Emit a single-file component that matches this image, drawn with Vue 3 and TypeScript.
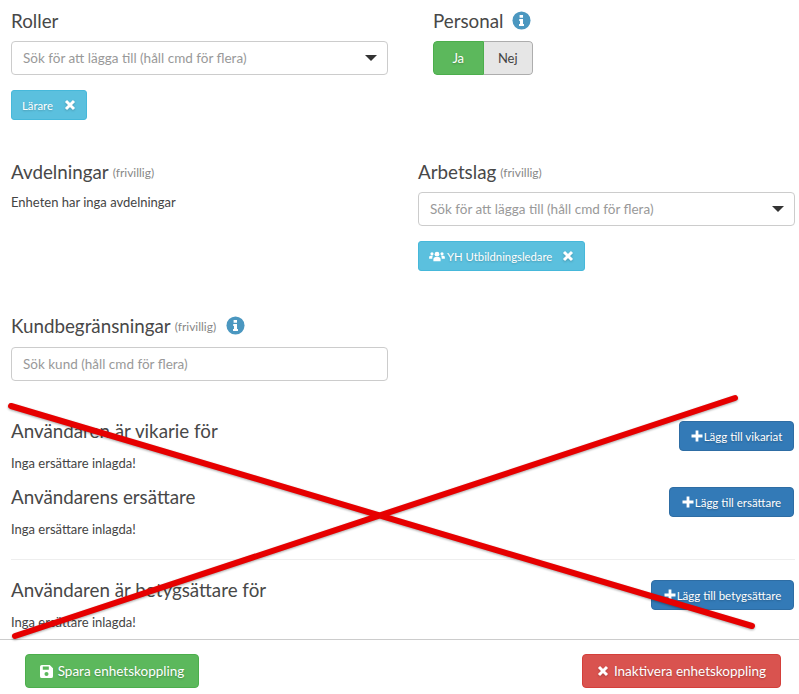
<script setup lang="ts">
interface Person { title: string; button: string; empty: string; width: number }

const people: Person[] = [
  { title: 'Användaren är vikarie för', button: 'Lägg till vikariat', empty: 'Inga ersättare inlagda!', width: 115 },
  { title: 'Användarens ersättare', button: 'Lägg till ersättare', empty: 'Inga ersättare inlagda!', width: 125 },
]
const grader: Person = { title: 'Användaren är betygsättare för', button: 'Lägg till betygsättare', empty: 'Inga ersättare inlagda!', width: 143 }
const placeholder = 'Sök för att lägga till (håll cmd för flera)'
</script>

<template>
  <div class="page">
    <main class="content">
      <section class="row row-roles">
        <div class="col">
          <h4>Roller</h4>
          <div class="field">
            <span>{{ placeholder }}</span>
            <i class="caret"></i>
          </div>
          <span class="tag">
            Lärare
            <svg class="tag-x" viewBox="0 0 12 12"><path d="M2 2l8 8M10 2l-8 8" /></svg>
          </span>
        </div>
        <div class="col col-staff">
          <h4>
            Personal
            <svg class="info" viewBox="0 0 20 20">
              <circle cx="10" cy="10" r="9.500" />
              <path d="M8 4.200h3.600v2.800H8zM7.600 8.400h4v5.200h1v2.200H7.400v-2.200h1v-3h-.8z" />
            </svg>
          </h4>
          <div class="toggle">
            <span class="on">Ja</span>
            <span class="off">Nej</span>
          </div>
        </div>
      </section>

      <section class="row row-units">
        <div class="col">
          <h4>Avdelningar <small>(frivillig)</small></h4>
          <p class="units-empty">Enheten har inga avdelningar</p>
        </div>
        <div class="col col-teams">
          <h4>Arbetslag <small>(frivillig)</small></h4>
          <div class="field">
            <span>{{ placeholder }}</span>
            <i class="caret"></i>
          </div>
          <span class="tag tag-team">
            <svg class="users" viewBox="0 0 20 14">
              <circle cx="10" cy="4" r="3" />
              <circle cx="3.600" cy="3.600" r="2" />
              <circle cx="16.400" cy="3.600" r="2" />
              <path d="M5.400 13V10.400C5.400 8.400 7 7.600 10 7.600s4.600.8 4.600 2.800V13zM0 10V8c0-1.400 1-2 3.600-2 .6 0 1 0 1.400.2C4.200 7 4 8 4 9.800V10zM20 10V8c0-1.400-1-2-3.600-2-.6 0-1 0-1.400.2.800.8 1 1.800 1 3.600v.2z" />
            </svg>
            YH Utbildningsledare
            <svg class="tag-x" viewBox="0 0 12 12"><path d="M2 2l8 8M10 2l-8 8" /></svg>
          </span>
        </div>
      </section>

      <section class="customers">
        <h4>
          Kundbegränsningar <small>(frivillig)</small>
          <svg class="info" viewBox="0 0 20 20">
            <circle cx="10" cy="10" r="9.500" />
            <path d="M8 4.200h3.600v2.800H8zM7.600 8.400h4v5.200h1v2.200H7.400v-2.200h1v-3h-.8z" />
          </svg>
        </h4>
        <div class="field"><span>Sök kund (håll cmd för flera)</span></div>
      </section>

      <section v-for="p in people" :key="p.title" class="person">
        <div class="person-head">
          <h4>{{ p.title }}</h4>
          <button class="btn btn-add" :style="{ width: p.width + 'px' }">
            <svg class="plus" viewBox="0 0 12 12"><path d="M6 .5v11M.5 6h11" /></svg>{{ p.button }}
          </button>
        </div>
        <p>{{ p.empty }}</p>
      </section>

      <hr />

      <section class="person">
        <div class="person-head">
          <h4>{{ grader.title }}</h4>
          <button class="btn btn-add" :style="{ width: grader.width + 'px' }">
            <svg class="plus" viewBox="0 0 12 12"><path d="M6 .5v11M.5 6h11" /></svg>{{ grader.button }}
          </button>
        </div>
        <p>{{ grader.empty }}</p>
      </section>
    </main>

    <footer class="footer">
      <button class="btn btn-save">
        <svg class="save" viewBox="0 0 14 14">
          <path fill-rule="evenodd" d="M2 0h8.500L14 3.500V12a2 2 0 0 1-2 2H2a2 2 0 0 1-2-2V2a2 2 0 0 1 2-2zM3 1.500V5h6.500V1.500zM7 7.500a2.200 2.200 0 1 0 0 4.400 2.200 2.200 0 0 0 0-4.400z" />
        </svg>
        Spara enhetskoppling
      </button>
      <button class="btn btn-off">
        <svg class="tag-x" viewBox="0 0 12 12"><path d="M2 2l8 8M10 2l-8 8" /></svg>
        Inaktivera enhetskoppling
      </button>
    </footer>

    <svg class="cross" viewBox="0 0 799 694" width="799" height="694">
      <path d="M11 406L752 626M15 636L735 398" />
    </svg>
  </div>
</template>

<style scoped>
.page {
  position: relative;
  width: 799px;
  height: 694px;
  overflow: hidden;
  background: #fff;
  color: #444;
  font-family: Lato, "Open Sans", sans-serif;
  font-size: 13px;
}
.content {
  height: 639px;
  padding: 0 4px 0 11px;
  box-sizing: border-box;
}
h4 {
  margin: 0;
  height: 20px;
  display: flex;
  align-items: center;
  gap: 4px;
  font-size: 18.800px;
  font-weight: 400;
  color: #484848;
  white-space: nowrap;
}
h4 small {
  font-size: 12px;
  color: #888;
  margin-top: 3px;
}
p {
  margin: 0;
  line-height: 18px;
  font-size: 13px;
}
.row {
  display: flex;
}
.row-roles {
  height: 161px;
  padding-top: 10px;
  box-sizing: border-box;
}
.row-units {
  height: 154px;
}
.col {
  width: 377px;
}
.col-staff {
  margin-left: 45px;
  width: 200px;
}
.col-teams {
  margin-left: 30px;
}
.field {
  position: relative;
  height: 34px;
  margin-top: 11px;
  padding: 0 11px;
  display: flex;
  align-items: center;
  box-sizing: border-box;
  border: 1px solid #ccc;
  border-radius: 4px;
  color: #999;
  font-size: 13.500px;
}
.caret {
  position: absolute;
  right: 10px;
  top: 13px;
  border-style: solid;
  border-width: 6px 6px 0;
  border-color: #333 transparent transparent;
}
.tag {
  display: inline-flex;
  align-items: center;
  height: 30px;
  margin-top: 15px;
  padding: 0 10px;
  box-sizing: border-box;
  gap: 11px;
  background: #5bc0de;
  border: 1px solid #46b8da;
  border-radius: 3px;
  color: #fff;
  font-size: 11.300px;
  text-shadow: 0 1px 2px rgba(0, 0, 0, .2);
}
.tag-team {
  gap: 2px;
}
.tag-team .tag-x {
  margin-left: 8px;
}
.tag-x {
  width: 12px;
  height: 12px;
  fill: none;
  stroke: #fff;
  stroke-width: 3;
  filter: drop-shadow(0 1px 1px rgba(0, 0, 0, .2));
}
.users {
  width: 16px;
  height: 11px;
  fill: #fff;
}
.info {
  width: 19px;
  height: 19px;
  margin-left: 4px;
}
.info circle {
  fill: #4b97c0;
}
.info path {
  fill: #fff;
}
.toggle {
  display: flex;
  width: 100px;
  height: 34px;
  margin-top: 11px;
  border-radius: 4px;
  overflow: hidden;
  box-sizing: border-box;
}
.toggle span {
  flex: 1;
  display: flex;
  align-items: center;
  justify-content: center;
  font-size: 13px;
  box-sizing: border-box;
}
.on {
  background: #5cb85c;
  color: #fff;
  text-shadow: 0 1px 2px rgba(0, 0, 0, .25);
  border: 1px solid #4cae4c;
  border-radius: 4px 0 0 4px;
}
.off {
  background: #e6e6e6;
  border: 1px solid #adadad;
  border-left: 0;
  border-radius: 0 4px 4px 0;
}
.units-empty {
  margin-top: 12px;
}
.customers {
  height: 106px;
}
.customers .info {
  margin-left: 6px;
}
.customers .field {
  width: 377px;
  margin-top: 12px;
}
.person {
  margin-bottom: 15px;
}
.person-head {
  display: flex;
  justify-content: space-between;
  align-items: flex-start;
  height: 30px;
}
.person-head h4 {
  margin-top: -1px;
}
.person p {
  margin-top: 3px;
}
hr {
  margin: 21px 0 20px;
  border: 0;
  border-top: 1px solid #eee;
}
.btn {
  display: inline-flex;
  align-items: center;
  justify-content: center;
  box-sizing: border-box;
  font-family: inherit;
  border-radius: 4px;
  color: #fff;
  border: 1px solid;
  padding: 0;
  text-shadow: 0 1px 2px rgba(0, 0, 0, .25);
}
.btn-add {
  height: 30px;
  margin-right: 1px;
  gap: 1px;
  font-size: 11.500px;
  background: #337ab7;
  border-color: #2e6da4;
}
.plus {
  width: 12px;
  height: 12px;
  fill: none;
  stroke: #fff;
  stroke-width: 2.800;
}
.footer {
  height: 55px;
  padding: 14px 18px 0 25px;
  box-sizing: border-box;
  display: flex;
  justify-content: space-between;
  border-top: 1px solid #ccc;
}
.footer .btn {
  height: 34px;
  gap: 5px;
  font-size: 13.500px;
}
.btn-save {
  width: 174px;
  background: #5cb85c;
  border-color: #4cae4c;
}
.btn-off {
  width: 199px;
  background: #d9534f;
  border-color: #d43f3a;
}
.save {
  width: 13px;
  height: 13px;
  fill: #fff;
}
.cross {
  position: absolute;
  left: 0;
  top: 0;
  pointer-events: none;
}
.cross path {
  fill: none;
  stroke: #e60000;
  stroke-width: 6;
  stroke-linecap: round;
  filter: drop-shadow(0 1px 1px rgba(0, 0, 0, .35));
}
</style>
